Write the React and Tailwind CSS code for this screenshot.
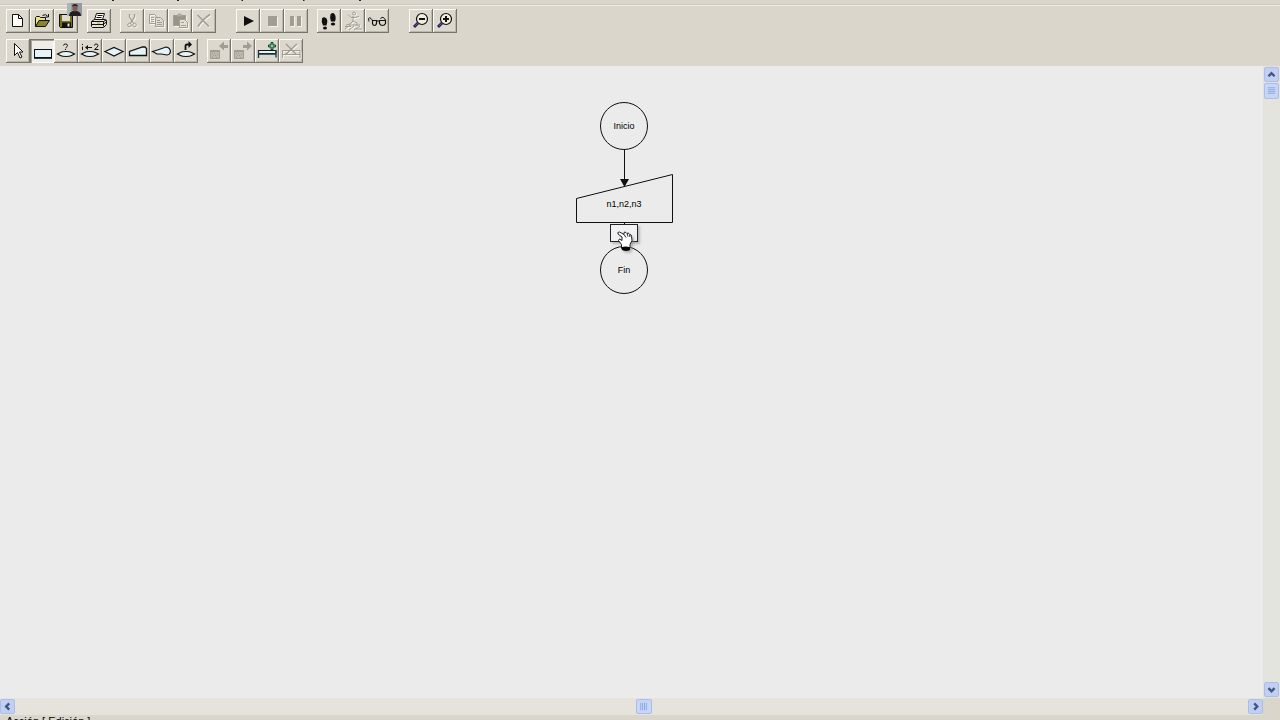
import React from "react";

const INK = "#111111";
const DIM = "#a19d93";
const CYAN = "#e6f4fa";

function Icon({ children }) {
  return (
    <svg viewBox="0 0 24 24" className="block size-6" fill="none" stroke={INK} strokeWidth="1" aria-hidden="true">
      {children}
    </svg>
  );
}

/* Etched look: light copy one pixel below and right of the gray strokes. */
function DimIcon({ children }) {
  return (
    <Icon>
      <g stroke="#f6f4ee" transform="translate(1 1)">{children}</g>
      <g stroke={DIM}>{children}</g>
    </Icon>
  );
}

function Terminal() {
  return <path d="M3.500 15L6.500 13.500Q8 12.500 12 12.500T17.500 13.500L20.500 15L17.500 16.500Q16 17.500 12 17.500T6.500 16.500Z" fill={CYAN} strokeWidth="1.200" />;
}

function Lens({ plus }) {
  return (
    <Icon>
      <path d="M9 14L5 18" stroke="#24245c" strokeWidth="3" />
      <path d="M9 14L6 17" stroke="#5a5aa8" />
      <circle cx="13" cy="10" r="5.500" fill="#f3eddc" strokeWidth="1.200" />
      <path d={plus ? "M10 10h6M13 7v6" : "M10 10h6"} strokeWidth="2" />
    </Icon>
  );
}

const feet = (
  <g fill={INK} stroke="none">
    <path d="M5 9.500q1.500-2 4-0.500 2 2 1 5.500l-0.500 2H6q-2-4-1-7z" />
    <ellipse cx="8" cy="19" rx="2" ry="1.600" />
    <path d="M13.500 5.500q2-2.500 4-0.500 2 3 0.500 7.500h-4q-1.500-4-0.500-7z" />
    <ellipse cx="16" cy="15" rx="2.200" ry="1.600" />
  </g>
);

const fileTools = [
  { name: "Nuevo", icon: <Icon><path d="M6.500 5.500h6l4 4v8h-10z" fill="#fffef8" /><path d="M12.500 5.500v4h4" /></Icon> },
  {
    name: "Abrir",
    icon: (
      <Icon>
        <path d="M5.500 17.500v-9l1-1h3l1 1h5v3" fill="#e9e48e" />
        <path d="M5.500 17.500l3.500-6h10.500l-4 6z" fill="#8d842a" />
        <path d="M12.500 6.500q3-2 5 0.500M18.500 5v3h-3" />
      </Icon>
    ),
  },
  {
    name: "Guardar",
    icon: (
      <Icon>
        <path d="M5.500 5.500h13v13h-12l-1-1z" fill="#77701f" />
        <rect x="8" y="6" width="8" height="6" fill="#dedacd" stroke="none" />
        <rect x="8" y="13.500" width="9" height="5" fill={INK} stroke="none" />
        <rect x="13.500" y="14.500" width="2" height="3" fill="#e8e4d8" stroke="none" />
      </Icon>
    ),
  },
];

const printTools = [
  {
    name: "Imprimir",
    icon: (
      <Icon>
        <path d="M7.500 10.500l2-6h8l-2 6" fill="#fffef8" />
        <path d="M10.500 6.500h5M9.500 8.500h5" />
        <path d="M4.500 12.500l3-2h11l1 1v4l-3 3h-11l-1-1z" fill="#e4e0d5" />
        <path d="M4.500 12.500h12v5M16.500 12.500l3-1.500M5 15.500h11M16.500 15l3-2" />
        <path d="M10 14h3" stroke="#b9ad3a" />
      </Icon>
    ),
  },
];

const editTools = [
  {
    name: "Cortar",
    off: true,
    icon: (
      <DimIcon>
        <path d="M9.500 5v3l4 6M14.500 5v3l-4 6" strokeWidth="1.300" />
        <circle cx="9.500" cy="16" r="1.800" />
        <circle cx="14.500" cy="16" r="1.800" />
      </DimIcon>
    ),
  },
  {
    name: "Copiar",
    off: true,
    icon: (
      <DimIcon>
        <path d="M5.500 5.500h5l2 2v7h-7zM7 8.500h3M7 10.500h3M7 12.500h3" />
        <path d="M11.500 8.500h5l3 3v6h-8zM13 11.500h3M13 13.500h5M13 15.500h5" fill="#dedad0" />
      </DimIcon>
    ),
  },
  {
    name: "Pegar",
    off: true,
    icon: (
      <DimIcon>
        <path d="M5.500 6.500h12v10h-12z" fill="#989489" />
        <path d="M8.500 7.500l2-2.500h2l2 2.500z" fill="#b5b1a6" />
        <path d="M11.500 10.500h5l3 3v5h-8zM13 13.500h3M13 16.500h5" fill="#e4e0d6" />
      </DimIcon>
    ),
  },
  { name: "Eliminar", off: true, icon: <DimIcon><path d="M5.500 6L17 17.500M18 5.500Q11 10 6 17.500" strokeWidth="1.600" /></DimIcon> },
];

const runTools = [
  { name: "Ejecutar", icon: <Icon><path d="M8 7l10 5-10 5z" fill={INK} stroke="none" /></Icon> },
  { name: "Detener", off: true, icon: <Icon><path d="M9 17.500h8.500V8" stroke="#f6f4ee" /><rect x="8" y="7" width="9" height="10" fill={DIM} stroke="none" /></Icon> },
  {
    name: "Pausa",
    off: true,
    icon: (
      <Icon>
        <path d="M7 17.500h3.500V8M14 17.500h3.500V8" stroke="#f6f4ee" />
        <path d="M6 7h4v10h-4zM13 7h4v10h-4z" fill={DIM} stroke="none" />
      </Icon>
    ),
  },
];

const stepTools = [
  { name: "Paso simple", icon: <Icon>{feet}</Icon> },
  {
    name: "Ejecutar hasta",
    off: true,
    icon: (
      <DimIcon>
        <circle cx="13" cy="4.500" r="1.500" />
        <path d="M7 5.500l3 3h4l4-1M12 7v5l4 2v3M12 12l-3 3-4 1M4 20l5-4h10M8 21l5-4M13 21l6-4M4 17.500h6M15 20h6" />
      </DimIcon>
    ),
  },
  {
    name: "Evaluar",
    icon: (
      <Icon>
        <path d="M4 12.500L3.500 9.500q1-1.500 2.500 0l2 2.500M11.500 12.500q1.500-1.500 3 0M15.500 10q1-2.500 3-1.500l2 2.500" />
        <path d="M7.500 11.500h4v3q-0.500 2-2 2t-2-2zM14.500 11.500h6v3q-1 2-3 2t-3-2z" strokeWidth="1.200" />
      </Icon>
    ),
  },
];

const zoomTools = [
  { name: "Alejar", icon: <Lens /> },
  { name: "Acercar", icon: <Lens plus /> },
];

const objectTools = [
  { name: "Cursor", icon: <Icon><path d="M8.500 4.500v12l3-3 2.500 5.500 2-1-2.500-5h3.500z" fill="#fffef8" /></Icon> },
  { name: "Asignación", pressed: true, icon: <Icon><rect x="4.500" y="10.500" width="17" height="8" fill={CYAN} /><path d="M4 19.500h18" stroke="#1b4552" /></Icon> },
  { name: "Lectura", icon: <Icon><Terminal /><path d="M9.500 6.500q0-1.500 2-1.500t2 1.500q0 1-2 2.500M11.500 10v1" /></Icon> },
  {
    name: "Ciclo para",
    icon: (
      <Icon>
        <Terminal />
        <path d="M4.500 7.500v3.500M4.500 5v1M8 8.500h6M16.500 6.500q0-1.500 1.500-1.500 2 0 2 1.500 0 1.500-3.500 4h4" />
        <path d="M7 8.500l3-2.500v5z" fill={INK} stroke="none" />
      </Icon>
    ),
  },
  { name: "Decisión", icon: <Icon><path d="M3 12.500L12 8.500l9 4-9 4.500z" fill={CYAN} strokeWidth="1.200" /></Icon> },
  { name: "Entrada", icon: <Icon><path d="M3.500 16.500v-4l13-4.500h2.500l1.500 1.500v7z" fill={CYAN} strokeWidth="1.300" /></Icon> },
  { name: "Salida", icon: <Icon><path d="M2.500 12.500l5-1.500L16 8q4 0.500 4.500 4.500-0.500 3-3.500 3.500l-6-1H7z" fill={CYAN} strokeWidth="1.200" /></Icon> },
  {
    name: "Llamada",
    icon: (
      <Icon>
        <Terminal />
        <path d="M11.500 11V7q0-1.500 1.500-1.500h2" strokeWidth="1.800" />
        <path d="M14.500 2l3.500 3.500-3.500 3.500z" fill={INK} stroke="none" />
      </Icon>
    ),
  },
];

function SubIcon({ forward }) {
  return (
    <Icon>
      <path d="M3 11h10v9h-10z" fill="#bcb8ad" stroke="none" />
      <path d="M3 12h10" stroke={DIM} strokeWidth="2" />
      <path d="M3.500 13v6.500h9V13M5.500 14v1M7.500 14v1M6.500 16v1M8.500 16v1M10.500 15v1M5.500 18v1M9.500 18v1" stroke={DIM} />
      <path d={forward ? "M12 6h4V2.500l5 4.500-5 4.500V9h-4z" : "M21 6h-4V2.500L12 7l5 4.500V9h4z"} fill={DIM} stroke="none" />
    </Icon>
  );
}

const subTools = [
  { name: "Subprograma anterior", off: true, icon: <SubIcon /> },
  { name: "Subprograma siguiente", off: true, icon: <SubIcon forward /> },
  {
    name: "Nuevo subprograma",
    icon: (
      <Icon>
        <path d="M3.500 11.500h17.500v3H3.500z" fill={CYAN} />
        <path d="M3.500 11v8M21 11v7.500M3 15h18" stroke="#123a46" strokeWidth="1.300" />
        <path d="M16 3.500h2v2.500h2.500v2H18v2.500h-2V8h-2.500V6H16z" fill="#7fd29a" stroke="#123d22" />
      </Icon>
    ),
  },
  { name: "Eliminar subprograma", off: true, icon: <DimIcon><path d="M3.500 19V11.500h17.500V19M3.500 15.500h17.500" /><path d="M7 5l10 10M18 5L6 16" strokeWidth="1.500" /></DimIcon> },
];

function ToolGroup({ tools }) {
  return (
    <div className="flex">
      {tools.map((t) => (
        <button
          key={t.name}
          type="button"
          aria-label={t.name}
          disabled={t.off}
          aria-pressed={t.pressed}
          className={
            t.pressed
              ? "size-6 bg-[#efede8] shadow-[inset_1px_1px_0_#77746c,inset_2px_2px_0_#aaa69c,inset_-1px_-1px_0_#fbfaf6]"
              : "size-6 bg-[#dcd8cd] shadow-[inset_-1px_-1px_0_#77746c,inset_1px_1px_0_#fbfaf6,inset_-2px_-2px_0_#bbb7ac]"
          }
        >
          {t.icon}
        </button>
      ))}
    </div>
  );
}

const arrows = {
  up: "M4 9.500L7.500 6 11 9.500",
  down: "M4 6L7.500 9.500 11 6",
  left: "M9.500 4L6 7.500 9.500 11",
  right: "M6 4L9.500 7.500 6 11",
};

function ScrollArrow({ dir, name }) {
  return (
    <button type="button" aria-label={name} className="size-[15px] shrink-0 rounded-[2px] border border-[#aebde2] bg-[#c0cff3]">
      <svg viewBox="0 0 15 15" className="block size-full" fill="none" stroke="#42577f" strokeWidth="2.800" aria-hidden="true">
        <path d={arrows[dir]} />
      </svg>
    </button>
  );
}

function Grip({ vertical }) {
  return (
    <svg viewBox="0 0 14 14" className="block size-full" stroke="#8fa6dc" aria-hidden="true">
      <path d={vertical ? "M3 3.500h8M3 5.500h8M3 7.500h8M3 9.500h8" : "M3.500 3v8M5.500 3v8M7.500 3v8M9.500 3v8"} />
    </svg>
  );
}

function Webcam() {
  return (
    <svg viewBox="0 0 15 13" className="absolute -right-1 -top-1.5 h-[13px] w-[15px]" aria-hidden="true">
      <rect width="15" height="13" fill="#8f9ba1" />
      <rect width="4" height="13" fill="#aab5b8" />
      <path d="M2 13q0-4 4-5h4q4 1 4 5z" fill="#251e20" />
      <ellipse cx="8" cy="5" rx="2.500" ry="3.500" fill="#85594f" />
      <path d="M5 4q0-3 3-3t3 3l-1-1H6z" fill="#30252a" />
    </svg>
  );
}

function Diagram() {
  return (
    <div className="absolute left-[576px] top-9 h-48 w-24 font-['Liberation_Sans',sans-serif] text-[9px] leading-3 text-black">
      <svg viewBox="0 0 98 193" className="absolute left-0 top-0 h-[193px] w-[98px]" fill="none" stroke="#111" aria-hidden="true">
        <circle cx="48" cy="24" r="23.500" />
        <path d="M48.500 48v30M0.500 96.500L96.500 72.500V120.500H0.500zM48.500 121v26" />
        <path d="M44 77h9l-4.500 8z" fill="#111" stroke="none" />
        <circle cx="48" cy="168" r="23.500" />
      </svg>
      <div className="absolute inset-x-0 top-[18px] text-center">Inicio</div>
      <div className="absolute inset-x-0 top-24 text-center">n1,n2,n3</div>
      <div className="absolute inset-x-0 top-[162px] text-center">Fin</div>
      <div className="absolute left-[34px] top-[122px] h-[18px] w-7 border border-[#222] bg-[#f1f1f4] shadow-[2px_2px_2px_#9999]" />
      <svg viewBox="0 0 20 24" className="absolute left-10 top-[126px] h-6 w-5 drop-shadow-[2px_2px_1px_#8888]" aria-hidden="true">
        <path d="M5.500 20v-3.500l-3-4 1-1.500 2.500 1.500L6 9 2 6q-1-2 1.500-2L8 6.500 8 4.500q1-1 2 0l1 1q1-1 2 0l1 1q1.500 0 1.500 2l0.500 4-2 4v3z" fill="#fff" stroke="#222" />
        <path d="M8 6.500l2 3M11 5.500l1 3M13.500 6.500l0.500 2.500" stroke="#222" />
        <path d="M5 19.500q5-2 9 0v2.500q-4 2-8 0z" fill="#080808" />
      </svg>
    </div>
  );
}

export default function App() {
  return (
    <div className="flex h-screen flex-col overflow-hidden bg-[#dad6cb] font-['Liberation_Sans',sans-serif] antialiased">
      <header className="shrink-0">
        <div className="h-[5px] border-b border-[#cbc7bc]">
          <svg className="block h-1 w-full" stroke="#222" aria-hidden="true">
            <path d="M112 0.500h2M177 0.500h2M241.500 0.500h1.500M303 0.500h1.500M359 0.500h2" />
          </svg>
        </div>
        <div role="toolbar" aria-label="Programa" className="flex border-t border-[#f0ede5] px-1.5 pt-[3px]">
          <div className="relative">
            <ToolGroup tools={fileTools} />
            <Webcam />
          </div>
          <div className="ml-[9px] flex gap-[9px]">
            <ToolGroup tools={printTools} />
            <ToolGroup tools={editTools} />
          </div>
          <div className="ml-5 flex gap-[9px]">
            <ToolGroup tools={runTools} />
            <ToolGroup tools={stepTools} />
          </div>
          <div className="ml-5">
            <ToolGroup tools={zoomTools} />
          </div>
        </div>
        <div role="toolbar" aria-label="Objetos" className="flex gap-[9px] px-1.5 pb-[3px] pt-1.5">
          <ToolGroup tools={objectTools} />
          <ToolGroup tools={subTools} />
        </div>
      </header>

      <div className="flex min-h-0 flex-1">
        <main className="relative min-w-0 flex-1 overflow-hidden bg-[#ebebeb]">
          <Diagram />
        </main>
        <div className="flex w-[17px] shrink-0 flex-col items-center bg-[#e4e4df] py-px">
          <ScrollArrow dir="up" name="Desplazar arriba" />
          <div className="mt-px h-4 w-[15px] rounded-[2px] border border-[#aebde2] bg-[#c6d6fb]">
            <Grip vertical />
          </div>
          <div className="flex-1" />
          <ScrollArrow dir="down" name="Desplazar abajo" />
        </div>
      </div>

      <div className="flex h-[17px] shrink-0">
        <div className="flex min-w-0 flex-1 items-center bg-[#e5e3dc]">
          <ScrollArrow dir="left" name="Desplazar a la izquierda" />
          <div className="flex flex-1 justify-center">
            <div className="ml-6 h-[15px] w-4 rounded-[2px] border border-[#aebde2] bg-[#c6d6fb]">
              <Grip />
            </div>
          </div>
          <ScrollArrow dir="right" name="Desplazar a la derecha" />
        </div>
        <div className="w-[17px] shrink-0" />
      </div>

      <footer className="h-[5px] shrink-0 overflow-hidden whitespace-pre px-1.5 text-[11px] leading-3 text-black">Acción [ Edición ]</footer>
    </div>
  );
}
